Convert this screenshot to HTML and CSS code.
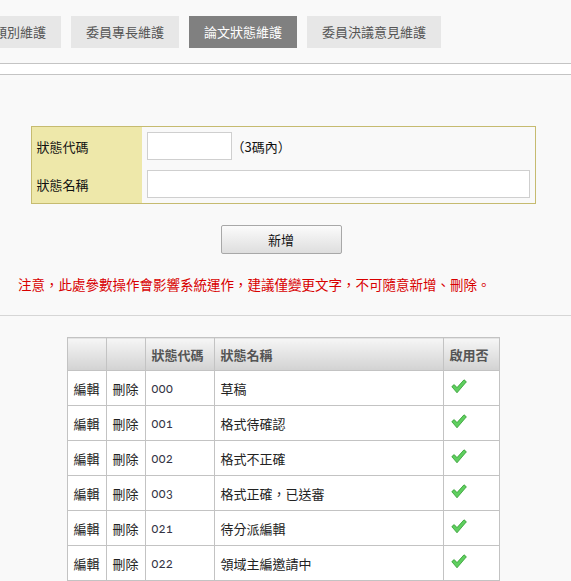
FILE: index.html
```html
<!DOCTYPE html>
<html lang="zh-Hant">
<head>
<meta charset="utf-8">
<title>論文狀態維護</title>
<link rel="stylesheet" href="styles.css">
</head>
<body>
<div class="tabs">
  <a class="tab">類別維護</a>
  <a class="tab">委員專長維護</a>
  <a class="tab active">論文狀態維護</a>
  <a class="tab">委員決議意見維護</a>
</div>
<div class="band"></div>

<div class="main">
  <table class="form">
    <tr>
      <th>狀態代碼</th>
      <td><input class="in-code" type="text"><span class="hint">（3碼內）</span></td>
    </tr>
    <tr>
      <th>狀態名稱</th>
      <td><input class="in-name" type="text"></td>
    </tr>
  </table>
  <div class="actions"><button class="btn" type="button">新增</button></div>
</div>
<p class="notice">注意，此處參數操作會影響系統運作，建議僅變更文字，不可隨意新增、刪除。</p>
<div class="sep"></div>

<div class="main">
  <table class="grid">
    <colgroup>
      <col class="c1"><col class="c2"><col class="c3"><col class="c4"><col class="c5">
    </colgroup>
    <thead>
      <tr><th></th><th></th><th>狀態代碼</th><th>狀態名稱</th><th>啟用否</th></tr>
    </thead>
    <tbody>
      <tr><td>編輯</td><td>刪除</td><td class="code">000</td><td>草稿</td><td><svg class="chk" viewBox="0 0 16 15"><path d="M0.8 7.6 L3.2 5.6 L6 8.6 L13 0.8 L15.4 2.8 L6 13.8 Z"/></svg></td></tr>
      <tr><td>編輯</td><td>刪除</td><td class="code">001</td><td>格式待確認</td><td><svg class="chk" viewBox="0 0 16 15"><path d="M0.8 7.6 L3.2 5.6 L6 8.6 L13 0.8 L15.4 2.8 L6 13.8 Z"/></svg></td></tr>
      <tr><td>編輯</td><td>刪除</td><td class="code">002</td><td>格式不正確</td><td><svg class="chk" viewBox="0 0 16 15"><path d="M0.8 7.6 L3.2 5.6 L6 8.6 L13 0.8 L15.4 2.8 L6 13.8 Z"/></svg></td></tr>
      <tr><td>編輯</td><td>刪除</td><td class="code">003</td><td>格式正確，已送審</td><td><svg class="chk" viewBox="0 0 16 15"><path d="M0.8 7.6 L3.2 5.6 L6 8.6 L13 0.8 L15.4 2.8 L6 13.8 Z"/></svg></td></tr>
      <tr><td>編輯</td><td>刪除</td><td class="code">021</td><td>待分派編輯</td><td><svg class="chk" viewBox="0 0 16 15"><path d="M0.8 7.6 L3.2 5.6 L6 8.6 L13 0.8 L15.4 2.8 L6 13.8 Z"/></svg></td></tr>
      <tr><td>編輯</td><td>刪除</td><td class="code">022</td><td>領域主編邀請中</td><td><svg class="chk" viewBox="0 0 16 15"><path d="M0.8 7.6 L3.2 5.6 L6 8.6 L13 0.8 L15.4 2.8 L6 13.8 Z"/></svg></td></tr>
    </tbody>
  </table>
</div>
</body>
</html>
```

FILE: styles.css
```css
html, body {
  margin: 0;
  padding: 0;
  background: #f9f9f9;
  font-family: "Noto Sans CJK TC", "Noto Sans CJK SC", sans-serif;
  font-size: 13px;
  color: #222;
  overflow: hidden;
}

.tabs {
  display: flex;
  gap: 10px;
  padding-top: 16px;
  margin-left: -21px;
}

.tab {
  display: block;
  height: 32px;
  line-height: 32px;
  padding: 0 15px;
  background: #e7e7e7;
  color: #555;
  white-space: nowrap;
}

.tab.active {
  background: #808080;
  color: #fff;
}

.band {
  margin-top: 15px;
  height: 10px;
  background: #fff;
  border-top: 1px solid #c4c4c4;
  border-bottom: 1px solid #c4c4c4;
}

.main {
  margin-right: 5px;
}

.form {
  width: 505px;
  margin: 51px auto 0;
  border-collapse: collapse;
  border: 1px solid #c6bb70;
}

.form th {
  width: 105px;
  background: #eee8aa;
  text-align: left;
  font-weight: normal;
  color: #111;
  padding: 0 0 0 5px;
  height: 38px;
}

.form td {
  padding: 0 5px;
  height: 38px;
  vertical-align: middle;
}

.form input {
  box-sizing: border-box;
  height: 28px;
  border: 1px solid #cfcfcf;
  background: #fff;
  margin: 0;
  padding: 0 4px;
  vertical-align: middle;
  font: inherit;
}

.in-code { width: 85px; }
.in-name { width: 383px; }

.hint {
  vertical-align: middle;
  color: #111;
  margin-left: 0;
}

.actions {
  display: flex;
  justify-content: center;
  margin-top: 21px;
  padding-right: 4px;
}

.btn {
  width: 121px;
  height: 29px;
  border: 1px solid #a8a8a8;
  border-radius: 2px;
  background: linear-gradient(#fbfbfb, #dedede);
  font: inherit;
  color: #111;
  padding: 0;
}

.notice {
  margin: 20px 0 0;
  padding-left: 18px;
  line-height: 20px;
  font-size: 13.5px;
  color: #d80000;
}

.sep {
  margin-top: 21px;
  border-top: 1px solid #d6d6d6;
}

.grid {
  width: 432px;
  margin: 21px auto 0;
  border-collapse: collapse;
  table-layout: fixed;
  background: #fff;
}

.c1 { width: 39px; }
.c2 { width: 39px; }
.c3 { width: 69px; }
.c4 { width: 229px; }
.c5 { width: 56px; }

.grid th, .grid td {
  border: 1px solid #c3c3c3;
  text-align: left;
  padding: 0 6px;
  white-space: nowrap;
  overflow: hidden;
}

.grid th {
  height: 32px;
  background: linear-gradient(#f6f6f6, #d2d2d2);
  color: #555;
  font-weight: bold;
}

.grid td {
  height: 34px;
  color: #222;
}

.grid td.code {
  font-family: Lato, "DejaVu Sans", sans-serif;
  font-variant-numeric: oldstyle-nums;
  font-size: 12.5px;
  color: #334;
  letter-spacing: 0.5px;
}

.chk {
  display: block;
  width: 16px;
  height: 15px;
  margin: -4px 0 0 1px;
  fill: #5fcf5f;
  stroke: #2f9a2f;
  stroke-width: 0.8;
  stroke-linejoin: round;
}
```
